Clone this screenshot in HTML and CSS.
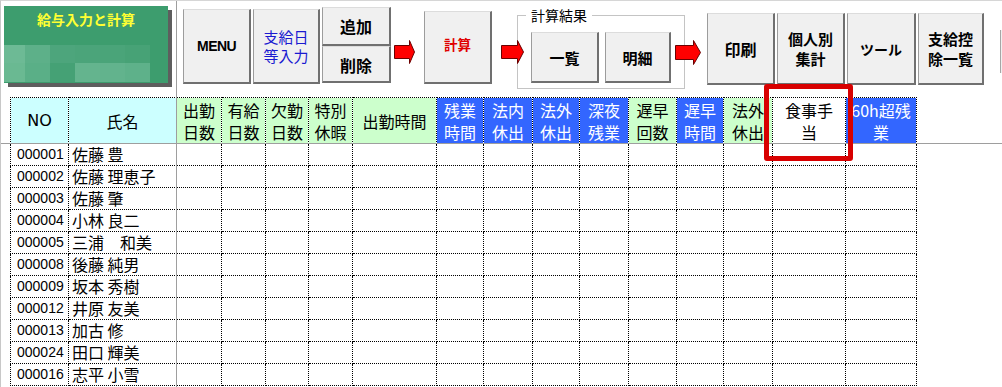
FILE: index.html
```html
<!DOCTYPE html>
<html lang="ja">

<head>
    <meta charset="UTF-8" />
    <title>給与入力と計算</title>
    <link rel="stylesheet" href="styles.css">
</head>

<body>
    <div class="sheet">
        <div class="toolbar">
            <div class="logo">
                <div class="logo-title">給与入力と計算</div>
                <div class="mosaic">
                    <span></span><span></span><span></span><span></span><span></span><span></span>
                    <span></span><span></span><span></span><span></span><span></span><span></span>
                </div>
            </div>
            <button class="btn btn-menu">MENU</button>
            <button class="btn btn-date">支給日<br>等入力</button>
            <div class="stack">
                <button class="btn btn-add">追加</button>
                <button class="btn btn-del">削除</button>
            </div>
            <svg class="arrow arrow-1" width="21" height="24" viewBox="0 0 21 24">
                <path d="M0.5 5.5 H15.5 V0.5 L20.5 12 L15.5 23.5 V18.5 H0.5 Z" />
            </svg>
            <button class="btn btn-calc">計算</button>
            <svg class="arrow arrow-2" width="23" height="24" viewBox="0 0 23 24">
                <path d="M0.5 5.5 H16.5 V0.5 L22.5 12 L16.5 23.5 V18.5 H0.5 Z" />
            </svg>
            <div class="result">
                <span class="result-label">計算結果</span>
                <button class="btn btn-list">一覧</button>
                <button class="btn btn-detail">明細</button>
            </div>
            <svg class="arrow arrow-3" width="26" height="25" viewBox="0 0 26 25">
                <path d="M0.5 5.5 H18.5 V0.5 L25.5 12.5 L18.5 24.5 V19.5 H0.5 Z" />
            </svg>
            <button class="btn btn-print">印刷</button>
            <button class="btn btn-person">個人別<br>集計</button>
            <button class="btn btn-tool">ツール</button>
            <button class="btn btn-pay">支給控<br>除一覧</button>
            <div class="btn-edge"></div>
        </div>

        <table class="grid">
            <colgroup>
                <col style="width:58px">
                <col style="width:108px">
                <col style="width:45px">
                <col style="width:44px">
                <col style="width:43px">
                <col style="width:44px">
                <col style="width:84px">
                <col style="width:47px">
                <col style="width:49px">
                <col style="width:47px">
                <col style="width:49px">
                <col style="width:48px">
                <col style="width:47px">
                <col style="width:49px">
                <col style="width:73px">
                <col style="width:71px">
            </colgroup>
            <thead>
                <tr>
                    <th class="cyan no">NO</th>
                    <th class="cyan">氏名</th>
                    <th class="green">出勤<br>日数</th>
                    <th class="green">有給<br>日数</th>
                    <th class="green">欠勤<br>日数</th>
                    <th class="green">特別<br>休暇</th>
                    <th class="green">出勤時間</th>
                    <th class="blue">残業<br>時間</th>
                    <th class="blue">法内<br>休出</th>
                    <th class="blue">法外<br>休出</th>
                    <th class="blue">深夜<br>残業</th>
                    <th class="green">遅早<br>回数</th>
                    <th class="blue">遅早<br>時間</th>
                    <th class="green">法外<br>休出</th>
                    <th class="white">食事手<br>当</th>
                    <th class="blue">60h超残<br>業</th>
                </tr>
            </thead>
            <tbody id="staffList"></tbody>
        </table>

        <div class="freeze-v"></div>
        <div class="freeze-h"></div>
        <div class="highlight"></div>
    </div>

    <script>
        const staffList = document.getElementById("staffList");

        const staff = [
            ["000001", "佐藤 豊"],
            ["000002", "佐藤 理恵子"],
            ["000003", "佐藤 肇"],
            ["000004", "小林 良二"],
            ["000005", "三浦　和美"],
            ["000008", "後藤 純男"],
            ["000009", "坂本 秀樹"],
            ["000012", "井原 友美"],
            ["000013", "加古 修"],
            ["000024", "田口 輝美"],
            ["000016", "志平 小雪"]
        ];

        staff.forEach(([no, name]) => {
            const row = `
<tr>
<td class="num">${no}</td>
<td class="name">${name}</td>
${"<td></td>".repeat(14)}
</tr>
`;
            staffList.insertAdjacentHTML("beforeend", row);
        });
    </script>
</body>

</html>
```

FILE: styles.css
```css
body {
    margin: 0;
    padding: 0;
    background: white;
    color: #000;
    font-family: "Noto Sans CJK JP", sans-serif;
    overflow: hidden;
}

.sheet {
    position: relative;
    width: 1001px;
    height: 386px;
    border-top: 1px solid #d6d6d6;
    border-left: 1px solid #c8c8c8;
    overflow: hidden;
}

.toolbar {
    display: flex;
    align-items: flex-start;
    height: 96px;
}

/* Logo */
.logo {
    width: 164px;
    height: 77px;
    margin: 5px 0 0 3px;
    background: #3d9d6e;
    box-shadow: 4px 4px 0 #5e5e5e;
    flex-shrink: 0;
}

.logo-title {
    padding-top: 5px;
    line-height: 16px;
    text-align: center;
    color: #ffff33;
    font-size: 14px;
    font-weight: 700;
}

.mosaic {
    display: grid;
    grid-template-columns: 21px repeat(5, 25px);
    grid-template-rows: 18px 19px;
    margin-top: 18px;
}

.mosaic span:nth-child(1) { background: #6dba95; }
.mosaic span:nth-child(2) { background: #5db089; }
.mosaic span:nth-child(3) { background: #4da57c; }
.mosaic span:nth-child(4) { background: #4ba47a; }
.mosaic span:nth-child(5) { background: #4aa479; }
.mosaic span:nth-child(6) { background: #47a276; }
.mosaic span:nth-child(7) { background: #6ab992; }
.mosaic span:nth-child(8) { background: #5aaf87; }
.mosaic span:nth-child(9) { background: #45a175; }
.mosaic span:nth-child(10) { background: #64b48e; }
.mosaic span:nth-child(11) { background: #62b38d; }
.mosaic span:nth-child(12) { background: #5eb18a; }

/* Buttons */
.btn {
    flex-shrink: 0;
    padding: 0;
    background: #f0f0f0;
    border: 1px solid #9c9c9c;
    border-top-color: #dcdcdc;
    border-right: 2px solid #707070;
    border-bottom: 2px solid #707070;
    font-family: "Noto Sans CJK JP", sans-serif;
    font-weight: 700;
    color: #000;
    cursor: pointer;
}

.btn-menu {
    width: 68px;
    height: 75px;
    margin: 8px 0 0 15px;
    font-family: "Liberation Sans", sans-serif;
    font-size: 14px;
    letter-spacing: -0.6px;
}

.btn-date {
    width: 67px;
    height: 75px;
    margin: 8px 0 0 2px;
    color: #1a1ad0;
    font-weight: 400;
    font-size: 15px;
    line-height: 19px;
}

.stack {
    display: flex;
    flex-direction: column;
    margin: 6px 0 0 2px;
}

.btn-add,
.btn-del {
    width: 69px;
    font-size: 16px;
}

.btn-add {
    height: 39px;
}

.btn-del {
    height: 37px;
    padding-top: 2px;
}

.btn-calc {
    width: 68px;
    height: 73px;
    margin: 10px 0 0 9px;
    color: #e00000;
    font-size: 13.5px;
    padding-bottom: 6px;
}

.arrow {
    position: relative;
    z-index: 1;
    flex-shrink: 0;
    margin-top: 39px;
}

.arrow path {
    fill: #ff0000;
    stroke: #6a0000;
    stroke-width: 1;
}

.arrow-1 {
    margin-left: 3px;
}

.arrow-2 {
    margin-left: 9px;
}

.arrow-3 {
    margin-left: -10px;
}

.result {
    position: relative;
    display: flex;
    gap: 6px;
    flex-shrink: 0;
    width: 168px;
    height: 74px;
    box-sizing: border-box;
    margin: 14px 0 0 -7px;
    padding: 16px 13px 5px;
    border: 1px solid #c4c4c4;
}

.result-label {
    position: absolute;
    top: -10px;
    left: 8px;
    padding: 0 5px;
    background: white;
    font-size: 14px;
    line-height: 18px;
}

.btn-list {
    width: 68px;
    height: 51px;
    font-size: 15px;
}

.btn-detail {
    width: 66px;
    height: 51px;
    font-size: 15px;
}

.btn-print,
.btn-person,
.btn-tool,
.btn-pay {
    height: 72px;
    margin-top: 12px;
}

.btn-print {
    width: 68px;
    margin-left: 6px;
    font-size: 16px;
}

.btn-person {
    width: 68px;
    margin-left: 2px;
    font-size: 15px;
    line-height: 20px;
}

.btn-tool {
    width: 69px;
    margin-left: 2px;
    font-size: 14px;
}

.btn-pay {
    width: 66px;
    margin-left: 2px;
    font-size: 15px;
    line-height: 20px;
}

.btn-edge {
    width: 2px;
    height: 43px;
    margin: 29px 0 0 16px;
    border-left: 1px solid #a6a6a6;
    background: #f0f0f0;
}

/* Grid */
.grid {
    border-collapse: collapse;
    table-layout: fixed;
    width: 906px;
    margin-left: 9px;
}

.grid th,
.grid td {
    border: 1px dotted #000;
    padding: 0;
    overflow: hidden;
    white-space: nowrap;
}

.grid th {
    height: 45px;
    font-weight: 400;
    font-size: 16px;
    line-height: 22px;
    text-align: center;
}

.grid td {
    height: 21px;
    line-height: 21px;
}

.cyan {
    background: #ccffff;
}

.green {
    background: #ccffcc;
}

.blue {
    background: #3366ff;
    color: white;
}

.white {
    background: white;
}

th.no {
    font-family: "DejaVu Sans", sans-serif;
    font-size: 16px;
}

td.num {
    padding-left: 6px;
    font-family: "Liberation Sans", sans-serif;
    font-size: 14px;
}

td.name {
    padding-left: 3px;
    font-size: 16px;
}

/* Frozen panes and highlight */
.freeze-v {
    position: absolute;
    top: 0;
    bottom: 0;
    left: 175px;
    width: 1px;
    background: #9e9e9e;
}

.freeze-h {
    position: absolute;
    top: 142px;
    left: 0;
    right: 0;
    height: 1px;
    background: #9e9e9e;
}

.highlight {
    position: absolute;
    top: 83px;
    left: 763px;
    width: 79px;
    height: 67px;
    border: 5px solid #d80000;
    border-radius: 3px;
}
```
